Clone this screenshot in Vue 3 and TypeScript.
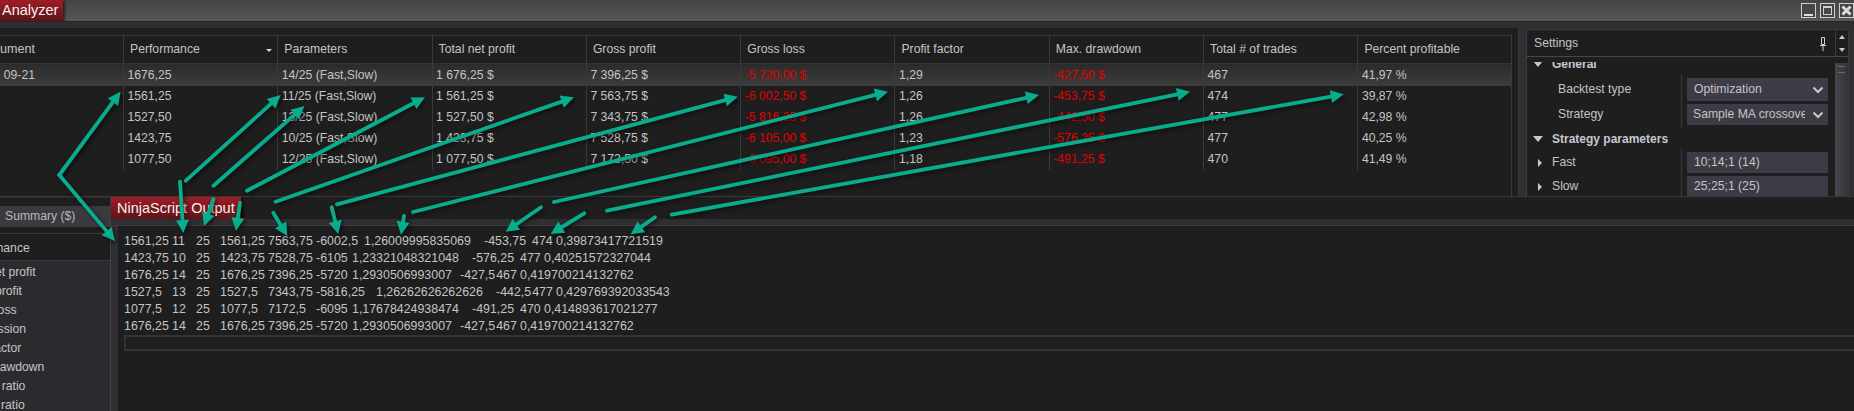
<script setup lang="ts">
import { computed } from 'vue'

const headers = ['Performance', 'Parameters', 'Total net profit', 'Gross profit', 'Gross loss', 'Profit factor', 'Max. drawdown', 'Total # of trades', 'Percent profitable']

const rows = [
  ['ES 09-21', '1676,25', '14/25 (Fast,Slow)', '1 676,25 $', '7 396,25 $', '-5 720,00 $', '1,29', '-427,50 $', '467', '41,97 %'],
  ['', '1561,25', '11/25 (Fast,Slow)', '1 561,25 $', '7 563,75 $', '-6 002,50 $', '1,26', '-453,75 $', '474', '39,87 %'],
  ['', '1527,50', '13/25 (Fast,Slow)', '1 527,50 $', '7 343,75 $', '-5 816,25 $', '1,26', '-442,50 $', '477', '42,98 %'],
  ['', '1423,75', '10/25 (Fast,Slow)', '1 423,75 $', '7 528,75 $', '-6 105,00 $', '1,23', '-576,25 $', '477', '40,25 %'],
  ['', '1077,50', '12/25 (Fast,Slow)', '1 077,50 $', '7 172,50 $', '-6 095,00 $', '1,18', '-491,25 $', '470', '41,49 %'],
]

const summary = ['Total net profit', 'Gross profit', 'Gross loss', 'Commission', 'Profit factor', 'Max. drawdown', 'Sharpe ratio', 'Sortino ratio']

const output = [
  '1561,25\t11\t25\t1561,25\t7563,75\t-6002,5\t1,26009995835069\t-453,75\t474\t0,39873417721519',
  '1423,75\t10\t25\t1423,75\t7528,75\t-6105\t1,23321048321048\t-576,25\t477\t0,40251572327044',
  '1676,25\t14\t25\t1676,25\t7396,25\t-5720\t1,2930506993007\t-427,5\u200a467\t0,419700214132762',
  '1527,5\t13\t25\t1527,5\t7343,75\t-5816,25\t1,26262626262626\t-442,5\u200a477\t0,429769392033543',
  '1077,5\t12\t25\t1077,5\t7172,5\t-6095\t1,17678424938474\t-491,25\t470\t0,414893617021277',
  '1676,25\t14\t25\t1676,25\t7396,25\t-5720\t1,2930506993007\t-427,5\u200a467\t0,419700214132762',
]

type P = [number, number]
const arrowData: P[][] = [
  [[59.3, 175], [120.6, 91.7]],
  [[59.3, 175], [115, 241]],
  [[185.8, 180.7], [280.7, 95]],
  [[213.5, 185.7], [304.5, 106]],
  [[247, 190.7], [425, 97.3]],
  [[275.6, 201.7], [574, 97.3]],
  [[337, 204.3], [737.8, 96.7]],
  [[413, 212], [888, 91.7]],
  [[554, 202], [1039, 95]],
  [[607, 210.7], [1190, 91.7]],
  [[671.7, 214.7], [1343.8, 94.3]],
  [[180, 181.7], [183.3, 233]],
  [[213.5, 199], [204, 226]],
  [[240, 202.7], [236, 230.7]],
  [[273.3, 212.7], [287.3, 236]],
  [[331.7, 207.3], [338.3, 234]],
  [[404, 216], [401, 234.7]],
  [[541, 207.3], [505.7, 231.7]],
  [[584.3, 213.3], [550.7, 234]],
  [[655, 217.3], [630.7, 234.3]],
]

const arrows = computed(() =>
  arrowData.map(([a, b]) => {
    const dx = b[0] - a[0]
    const dy = b[1] - a[1]
    const len = Math.hypot(dx, dy)
    const ux = dx / len
    const uy = dy / len
    const bx = b[0] - ux * 13
    const by = b[1] - uy * 13
    return {
      line: `M${a[0]} ${a[1]}L${bx.toFixed(1)} ${by.toFixed(1)}`,
      head: `${b[0]},${b[1]} ${(bx - uy * 6.5).toFixed(1)},${(by + ux * 6.5).toFixed(1)} ${(bx + uy * 6.5).toFixed(1)},${(by - ux * 6.5).toFixed(1)}`,
    }
  }),
)
</script>

<template>
  <div class="app">
    <header class="title">
      <div class="red-tab analyzer">Analyzer</div>
      <div class="win-buttons">
        <span class="win-btn"><i class="min"></i></span>
        <span class="win-btn"><i class="max"></i></span>
        <span class="win-btn">
          <svg width="13" height="13" viewBox="0 0 13 13"><path d="M2.500 2.500L10.500 10.500M10.500 2.500L2.500 10.500" stroke="#dcdcdc" stroke-width="3" /></svg>
        </span>
      </div>
    </header>
    <div class="top-strip"></div>

    <section class="top">
      <div class="grid-panel">
        <div class="table">
          <div class="tr head">
            <div class="td first"><span class="inst">Instrument</span></div>
            <div v-for="(h, i) in headers" :key="h" class="td">
              {{ h }}
              <svg v-if="i === 0" class="sort" width="6" height="3" viewBox="0 0 6 3"><path d="M0 0H6L3 3Z" fill="#d8d8d8" /></svg>
            </div>
          </div>
          <div v-for="(r, ri) in rows" :key="ri" class="tr" :class="{ selected: ri === 0 }">
            <div class="td first"><span>{{ r[0] }}</span></div>
            <div v-for="(c, ci) in r.slice(1)" :key="ci" class="td" :class="{ neg: ci === 4 || ci === 6 }">{{ c }}</div>
          </div>
        </div>
      </div>

      <aside class="settings">
        <div class="settings-main">
          <div class="settings-head">
            <span>Settings</span>
            <svg width="8" height="14" viewBox="0 0 8 14"><path d="M2.500 0.500H5.500V7.500H2.500ZM1 8.500H7M4 9V14" fill="none" stroke="#d0d0d0" stroke-width="1" /></svg>
          </div>
          <div class="settings-body">
            <div class="group-row general"><i class="tri down"></i><b>General</b></div>
            <div class="prop-block">
              <div class="prop"><label class="indent">Backtest type</label><div class="val"><span>Optimization</span><svg width="12" height="8" viewBox="0 0 12 8"><path d="M1.500 1.500L6 6L10.500 1.500" fill="none" stroke="#c8c8c8" stroke-width="2" /></svg></div></div>
              <div class="prop"><label class="indent">Strategy</label><div class="val"><span class="cut">Sample MA crossover</span><svg width="12" height="8" viewBox="0 0 12 8"><path d="M1.500 1.500L6 6L10.500 1.500" fill="none" stroke="#c8c8c8" stroke-width="2" /></svg></div></div>
            </div>
            <div class="group-row params"><i class="tri down"></i><b>Strategy parameters</b></div>
            <div class="prop-block second">
              <div class="prop"><label><i class="tri right"></i>Fast</label><div class="val"><span>10;14;1 (14)</span></div></div>
              <div class="prop"><label><i class="tri right"></i>Slow</label><div class="val"><span>25;25;1 (25)</span></div></div>
            </div>
          </div>
        </div>
        <div class="scroll">
          <div class="scroll-btns">
            <i class="mini up"></i>
            <i class="mini dn"></i>
          </div>
          <div class="thumb-wrap"><div class="thumb"></div></div>
        </div>
      </aside>
    </section>

    <section class="bottom">
      <aside class="summary">
        <div class="sum-tab">Summary ($)</div>
        <div class="sum-head"><span>Performance</span></div>
        <div class="sum-list">
          <div v-for="s in summary" :key="s" class="sum-item">{{ s }}</div>
        </div>
      </aside>
      <div class="output-wrap">
        <div class="output-tabs">
          <div class="red-tab ninja">NinjaScript Output</div>
        </div>
        <div class="output-strip"></div>
        <div class="output-row">
          <div class="output">
            <div v-for="(l, i) in output" :key="i" class="line">{{ l }}</div>
            <div class="input-box"></div>
          </div>
        </div>
      </div>
    </section>

    <svg class="arrows" width="1854" height="411" viewBox="0 0 1854 411">
      <g v-for="(a, i) in arrows" :key="i">
        <path :d="a.line" fill="none" stroke="#08ad8d" stroke-width="3.8" stroke-linecap="round" />
        <polygon :points="a.head" fill="#08ad8d" />
      </g>
    </svg>
  </div>
</template>

<style>
html, body { margin: 0; background: #1e1e1e; }
</style>

<style scoped>
.app {
  position: relative;
  width: 1854px;
  height: 411px;
  overflow: hidden;
  display: flex;
  flex-direction: column;
  background: #1e1e1e;
  color: #c4c4c4;
  font: 12.2px/1 "Liberation Sans", Arial, sans-serif;
}
.title {
  height: 21px;
  flex: none;
  display: flex;
  justify-content: space-between;
  background: linear-gradient(#444444, #565656);
}
.red-tab {
  color: #f2f2f2;
  font-size: 14.5px;
  background: linear-gradient(#a01c27, #5e1418);
  box-shadow: 2px 1px 2px rgba(0, 0, 0, 0.5);
}
.analyzer {
  width: 63px;
  height: 21px;
  line-height: 21px;
  padding-left: 2px;
  box-sizing: border-box;
}
.win-buttons {
  display: flex;
  gap: 4px;
  padding-top: 3px;
}
.win-btn {
  width: 15px;
  height: 15px;
  border: 1px solid #cfcfcf;
  box-sizing: border-box;
  background: #464646;
  display: flex;
  align-items: center;
  justify-content: center;
}
.win-btn .min {
  width: 9px;
  height: 2px;
  background: #dcdcdc;
  margin-top: 8px;
}
.win-btn .max {
  width: 9px;
  height: 9px;
  border: 1px solid #cfcfcf;
  border-top-width: 2px;
  box-sizing: border-box;
}
.top-strip {
  height: 7px;
  flex: none;
  background: #2f2f33;
  border-top: 1px solid #232325;
  box-sizing: border-box;
}
.top {
  height: 168px;
  flex: none;
  display: flex;
  background: #2f2f33;
  border-bottom: 1px solid #3a3a3c;
  box-sizing: content-box;
}
.grid-panel {
  width: 1519px;
  flex: none;
  box-sizing: border-box;
  padding: 7px 6px 0 0;
  background: #1e1e1e;
  border-right: 1px solid #39393c;
  overflow: hidden;
}
.table {
  height: 161px;
  border-top: 1px solid #3a3a3c;
  border-right: 1px solid #3a3a3c;
  box-sizing: border-box;
}
.tr {
  display: grid;
  grid-template-columns: 123px repeat(8, 154.3px) 1fr;
  height: 21px;
  align-items: stretch;
}
.tr.head {
  border-bottom: 1px solid #333335;
  box-sizing: border-box;
  height: 28px;
}
.td {
  display: flex;
  align-items: center;
  border-left: 1px solid #3a3a3c;
  white-space: nowrap;
  overflow: hidden;
  box-sizing: border-box;
  position: relative;
}
.head .td { padding-left: 6px; }
.tr:not(.head) .td { padding-left: 3.5px; }
.tr .td.first {
  border-left: 0;
  justify-content: flex-end;
  padding: 0 88px 0 0;
}
.inst { font-size: 12.6px; }
.tr.selected {
  height: 22px;
  background: linear-gradient(#2b2b2b, #3c3c3c);
}
.neg { color: #e10000; }
.sort {
  position: absolute;
  right: 5px;
  top: 13px;
}
.settings {
  margin: 1px 5px 0 7px;
  flex: 1;
  display: flex;
  background: #1e1e1e;
  min-width: 0;
  border-top: 1px solid #3a3a3c;
  border-left: 1px solid #3a3a3c;
  border-right: 1px solid #3a3a3c;
}
.settings-main {
  width: 308px;
  flex: none;
  display: flex;
  flex-direction: column;
  overflow: hidden;
}
.settings-head {
  height: 27px;
  flex: none;
  display: flex;
  align-items: center;
  justify-content: space-between;
  padding: 0 8px 0 7px;
  border-bottom: 1px solid #48484a;
  box-sizing: border-box;
}
.settings-head svg { margin-top: 2px; }
.settings-body {
  flex: 1;
  overflow: hidden;
  margin-top: 5px;
  padding-left: 11px;
}
.group-row {
  height: 21px;
  margin-left: -5px;
  display: flex;
  align-items: center;
  gap: 9px;
}
.group-row b { font-weight: 700; color: #c8c8d0; font-size: 12px; }
.group-row.general {
  height: 24px;
  margin-top: -10.5px;
  margin-bottom: -0.5px;
}
.tri {
  display: inline-block;
  width: 0;
  height: 0;
  flex: none;
}
.tri.down {
  border-left: 5px solid transparent;
  border-right: 5px solid transparent;
  border-top: 6px solid #c8c8c8;
}
.tri.right {
  border-top: 4px solid transparent;
  border-bottom: 4px solid transparent;
  border-left: 4px solid #c8c8c8;
  margin-right: 10px;
}
.prop-block {
  margin-left: 143px;
  border-left: 1px solid #3a3a3c;
  padding: 3px 0 3px 5px;
  display: flex;
  flex-direction: column;
  gap: 3px;
}
.prop {
  display: flex;
  height: 21px;
}
.prop:first-child { height: 23px; }
.prop-block.second .prop { height: 21px; }
.prop label {
  width: 143px;
  margin-left: -149px;
  margin-right: 6px;
  display: flex;
  align-items: center;
  flex: none;
}
.prop label.indent { padding-left: 20px; box-sizing: border-box; }
.val {
  width: 141px;
  background: #3c3c46;
  display: flex;
  align-items: center;
  justify-content: space-between;
  padding: 0 4px 0 7px;
  box-sizing: border-box;
}
.cut {
  overflow: hidden;
  white-space: nowrap;
  width: 112px;
  margin-left: -1px;
  flex: none;
}
.scroll {
  flex: 1;
  display: flex;
  flex-direction: column;
  min-width: 0;
}
.scroll-btns {
  height: 27px;
  display: flex;
  flex-direction: column;
  align-items: center;
  justify-content: center;
  gap: 9px;
  flex: none;
  border-left: 1px solid #3a3a3c;
  border-bottom: 1px solid #48484a;
  box-sizing: border-box;
}
.mini { width: 0; height: 0; display: block; }
.mini.up { border: 3.5px solid transparent; border-top: 0; border-bottom: 4px solid #c8c8c8; }
.mini.dn { border: 3.5px solid transparent; border-bottom: 0; border-top: 4px solid #c8c8c8; }
.thumb-wrap { flex: 1; padding-top: 6px; box-sizing: border-box; min-height: 0; }
.thumb {
  height: 100%;
  background: linear-gradient(90deg, #46464c, #333338);
  position: relative;
}
.thumb::before {
  content: "";
  position: absolute;
  left: 3px;
  right: 3px;
  top: 3px;
  height: 5px;
  border-top: 1px solid #6a6a70;
  border-bottom: 1px solid #6a6a70;
}
.bottom {
  flex: 1;
  display: flex;
  min-height: 0;
}
.summary {
  width: 110px;
  flex: none;
  display: flex;
  flex-direction: column;
  overflow: hidden;
  padding-top: 8px;
  border-right: 1px solid #3f3f44;
  box-sizing: content-box;
  border-top: 1px solid #2c2c2c;
}
.sum-tab {
  height: 21px;
  line-height: 21px;
  background: #3a3a40;
  padding-left: 5px;
  flex: none;
  color: #b8b8b8;
}
.sum-head {
  margin-top: 6px;
  height: 28px;
  line-height: 28px;
  flex: none;
  border-top: 1px solid #3a3a3c;
  border-bottom: 1px solid #3a3a3c;
  box-sizing: border-box;
  white-space: nowrap;
}
.sum-head span { margin-left: -40px; }
.sum-list {
  flex: 1;
  background: #2b2b2f;
  padding-top: 2px;
}
.sum-item {
  height: 19px;
  line-height: 19px;
  margin-left: -41px;
  white-space: nowrap;
}
.output-wrap {
  flex: 1;
  min-width: 0;
  display: flex;
  flex-direction: column;
}
.output-tabs {
  height: 22px;
  flex: none;
}
.ninja {
  width: 130px;
  height: 22px;
  line-height: 22px;
  padding-left: 6px;
  box-sizing: border-box;
}
.output-strip {
  height: 7px;
  flex: none;
  background: #2f2f33;
  border-bottom: 1px solid #3d3d40;
  box-sizing: border-box;
}
.output-row {
  flex: 1;
  padding-left: 7px;
  background: #2f2f33;
  min-height: 0;
}
.output {
  height: 100%;
  box-sizing: border-box;
  background: #1e1e1e;
  padding: 7px 0 0 6px;
  overflow: hidden;
}
.line {
  height: 17px;
  line-height: 17px;
  white-space: pre;
  tab-size: 12px;
  font-size: 12.4px;
  color: #c4c4c4;
}
.input-box {
  height: 16px;
  margin-right: -3px;
  border: 2px solid #333335;
  box-sizing: border-box;
}
.arrows {
  position: absolute;
  left: 0;
  top: 0;
  pointer-events: none;
  filter: drop-shadow(2px 2px 2px rgba(0, 0, 0, 0.55));
}
</style>
